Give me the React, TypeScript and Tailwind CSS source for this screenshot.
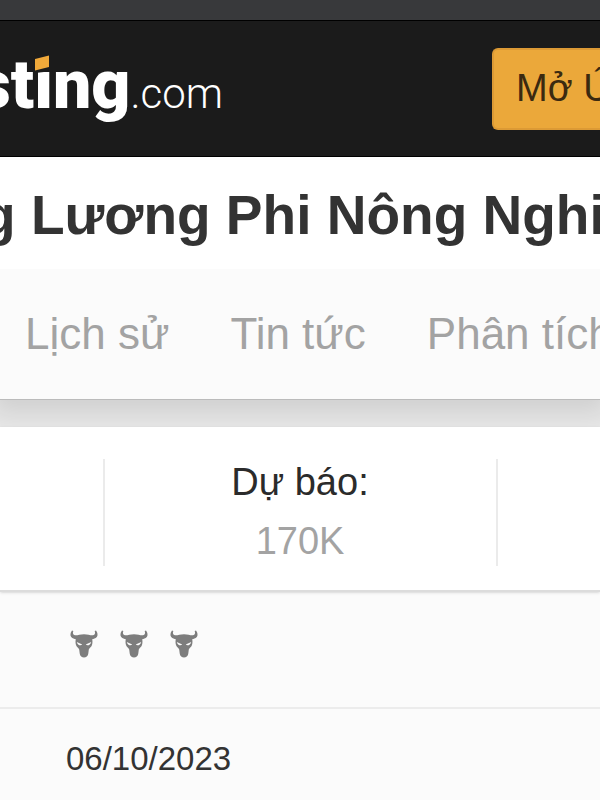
import React from 'react';

const tabs = [
  { label: 'Lịch sử', href: '#history' },
  { label: 'Tin tức', href: '#news' },
  { label: 'Phân tích', href: '#analysis' },
];

const BullIcon: React.FC = () => (
  <svg viewBox="0 0 28 28" className="h-7 w-7 text-[#7d7d7d]" aria-hidden="true">
    <path
      fill="currentColor"
      d="M2 .5C.2 2.500 0 5.500 1.200 7C2.500 8.600 4.500 8.800 5.800 9.200C5.400 11 5.400 13 6 15C6.700 17.200 8.800 17.800 9.200 19.500L9.700 23.500C9.900 26.300 12 27.500 14 27.500C16 27.500 18.100 26.300 18.300 23.500L18.800 19.500C19.200 17.800 21.300 17.200 22 15C22.600 13 22.600 11 22.200 9.200C23.500 8.800 25.500 8.600 26.800 7C28 5.500 27.800 2.500 26 .5L24.700 1C25.500 3 25 5 23 5.300C20.500 5.600 18 4.200 14 4.200C10 4.200 7.500 5.600 5 5.300C3 5 2.500 3 3.300 1Z"
    />
    <path
      fill="#fbfbfb"
      d="M6.800 12L12.200 14.600C11 16 7.600 15.600 6.800 12ZM21.200 12L15.800 14.600C17 16 20.400 15.600 21.200 12Z"
    />
  </svg>
);

const Logo: React.FC = () => (
  <a
    href="#home"
    className="-ml-6 flex items-baseline pb-2 whitespace-nowrap font-[Roboto,sans-serif] text-white"
  >
    <span className="text-[68px] leading-20 font-black">
      st
      <span className="relative">
        i
        <svg viewBox="0 0 20 20" className="absolute top-2 -left-px h-5 w-5" aria-hidden="true">
          <path fill="#1b1b1b" d="M0 0H20V18L2 20H0Z" />
          <path fill="#f0a93a" d="M2 6L16 2.500V14L2 17.500Z" />
        </svg>
      </span>
      ng
    </span>
    <span className="text-[42px] font-light">.com</span>
  </a>
);

const App: React.FC = () => {
  return (
    <div className="min-h-screen overflow-hidden bg-[#fbfbfb] font-['Liberation_Sans',Arial,sans-serif] text-[#333]">
      <div className="h-5 bg-[#38393b]" />

      <header className="flex h-[137px] items-center justify-between border-y border-black bg-[#1b1b1b]">
        <Logo />
        <button
          type="button"
          className="h-[82px] w-[108px] shrink-0 overflow-hidden rounded-l-md border-2 border-r-0 border-[#dc9a35] bg-[#eba83a] pl-[22px] text-left text-[38px] whitespace-nowrap text-[#3b2a10]"
        >
          Mở Ứ
        </button>
      </header>

      <main>
        <h1 className="relative z-10 h-28 bg-white pt-0.5 text-[55px] leading-28 font-bold whitespace-nowrap">
          <span className="-ml-[18px] block">g Lương Phi Nông Nghi</span>
        </h1>

        <nav className="relative flex h-[131px] items-center gap-[61px] border-b border-[#bbb] bg-[#fbfbfb] pl-[25px] text-[44px] whitespace-nowrap text-[#a3a3a3] shadow-[0_6px_24px_8px_rgba(0,0,0,0.1)]">
          {tabs.map((tab) => (
            <a key={tab.href} href={tab.href}>
              {tab.label}
            </a>
          ))}
        </nav>

        <div className="h-[27px] bg-[#e8e8e8]" />

        <section className="relative flex justify-center border-b-2 border-[#dcdcdc] bg-white pt-8 pb-6 shadow-sm">
          <dl className="h-[107px] w-[395px] border-x-2 border-[#ebebeb] text-center text-[38px]">
            <dt className="leading-[46px] text-[#2b2b2b]">Dự báo:</dt>
            <dd className="mt-3 leading-12 text-[#a3a3a3]">170K</dd>
          </dl>
        </section>

        <div className="flex h-[117px] items-center gap-[22px] border-b-2 border-[#ececec] pb-3 pl-[70px]">
          <BullIcon />
          <BullIcon />
          <BullIcon />
        </div>

        <div className="flex h-[100px] items-center pl-[66px] text-[33px]">
          <time dateTime="2023-10-06">06/10/2023</time>
        </div>
      </main>
    </div>
  );
};

export default App;
